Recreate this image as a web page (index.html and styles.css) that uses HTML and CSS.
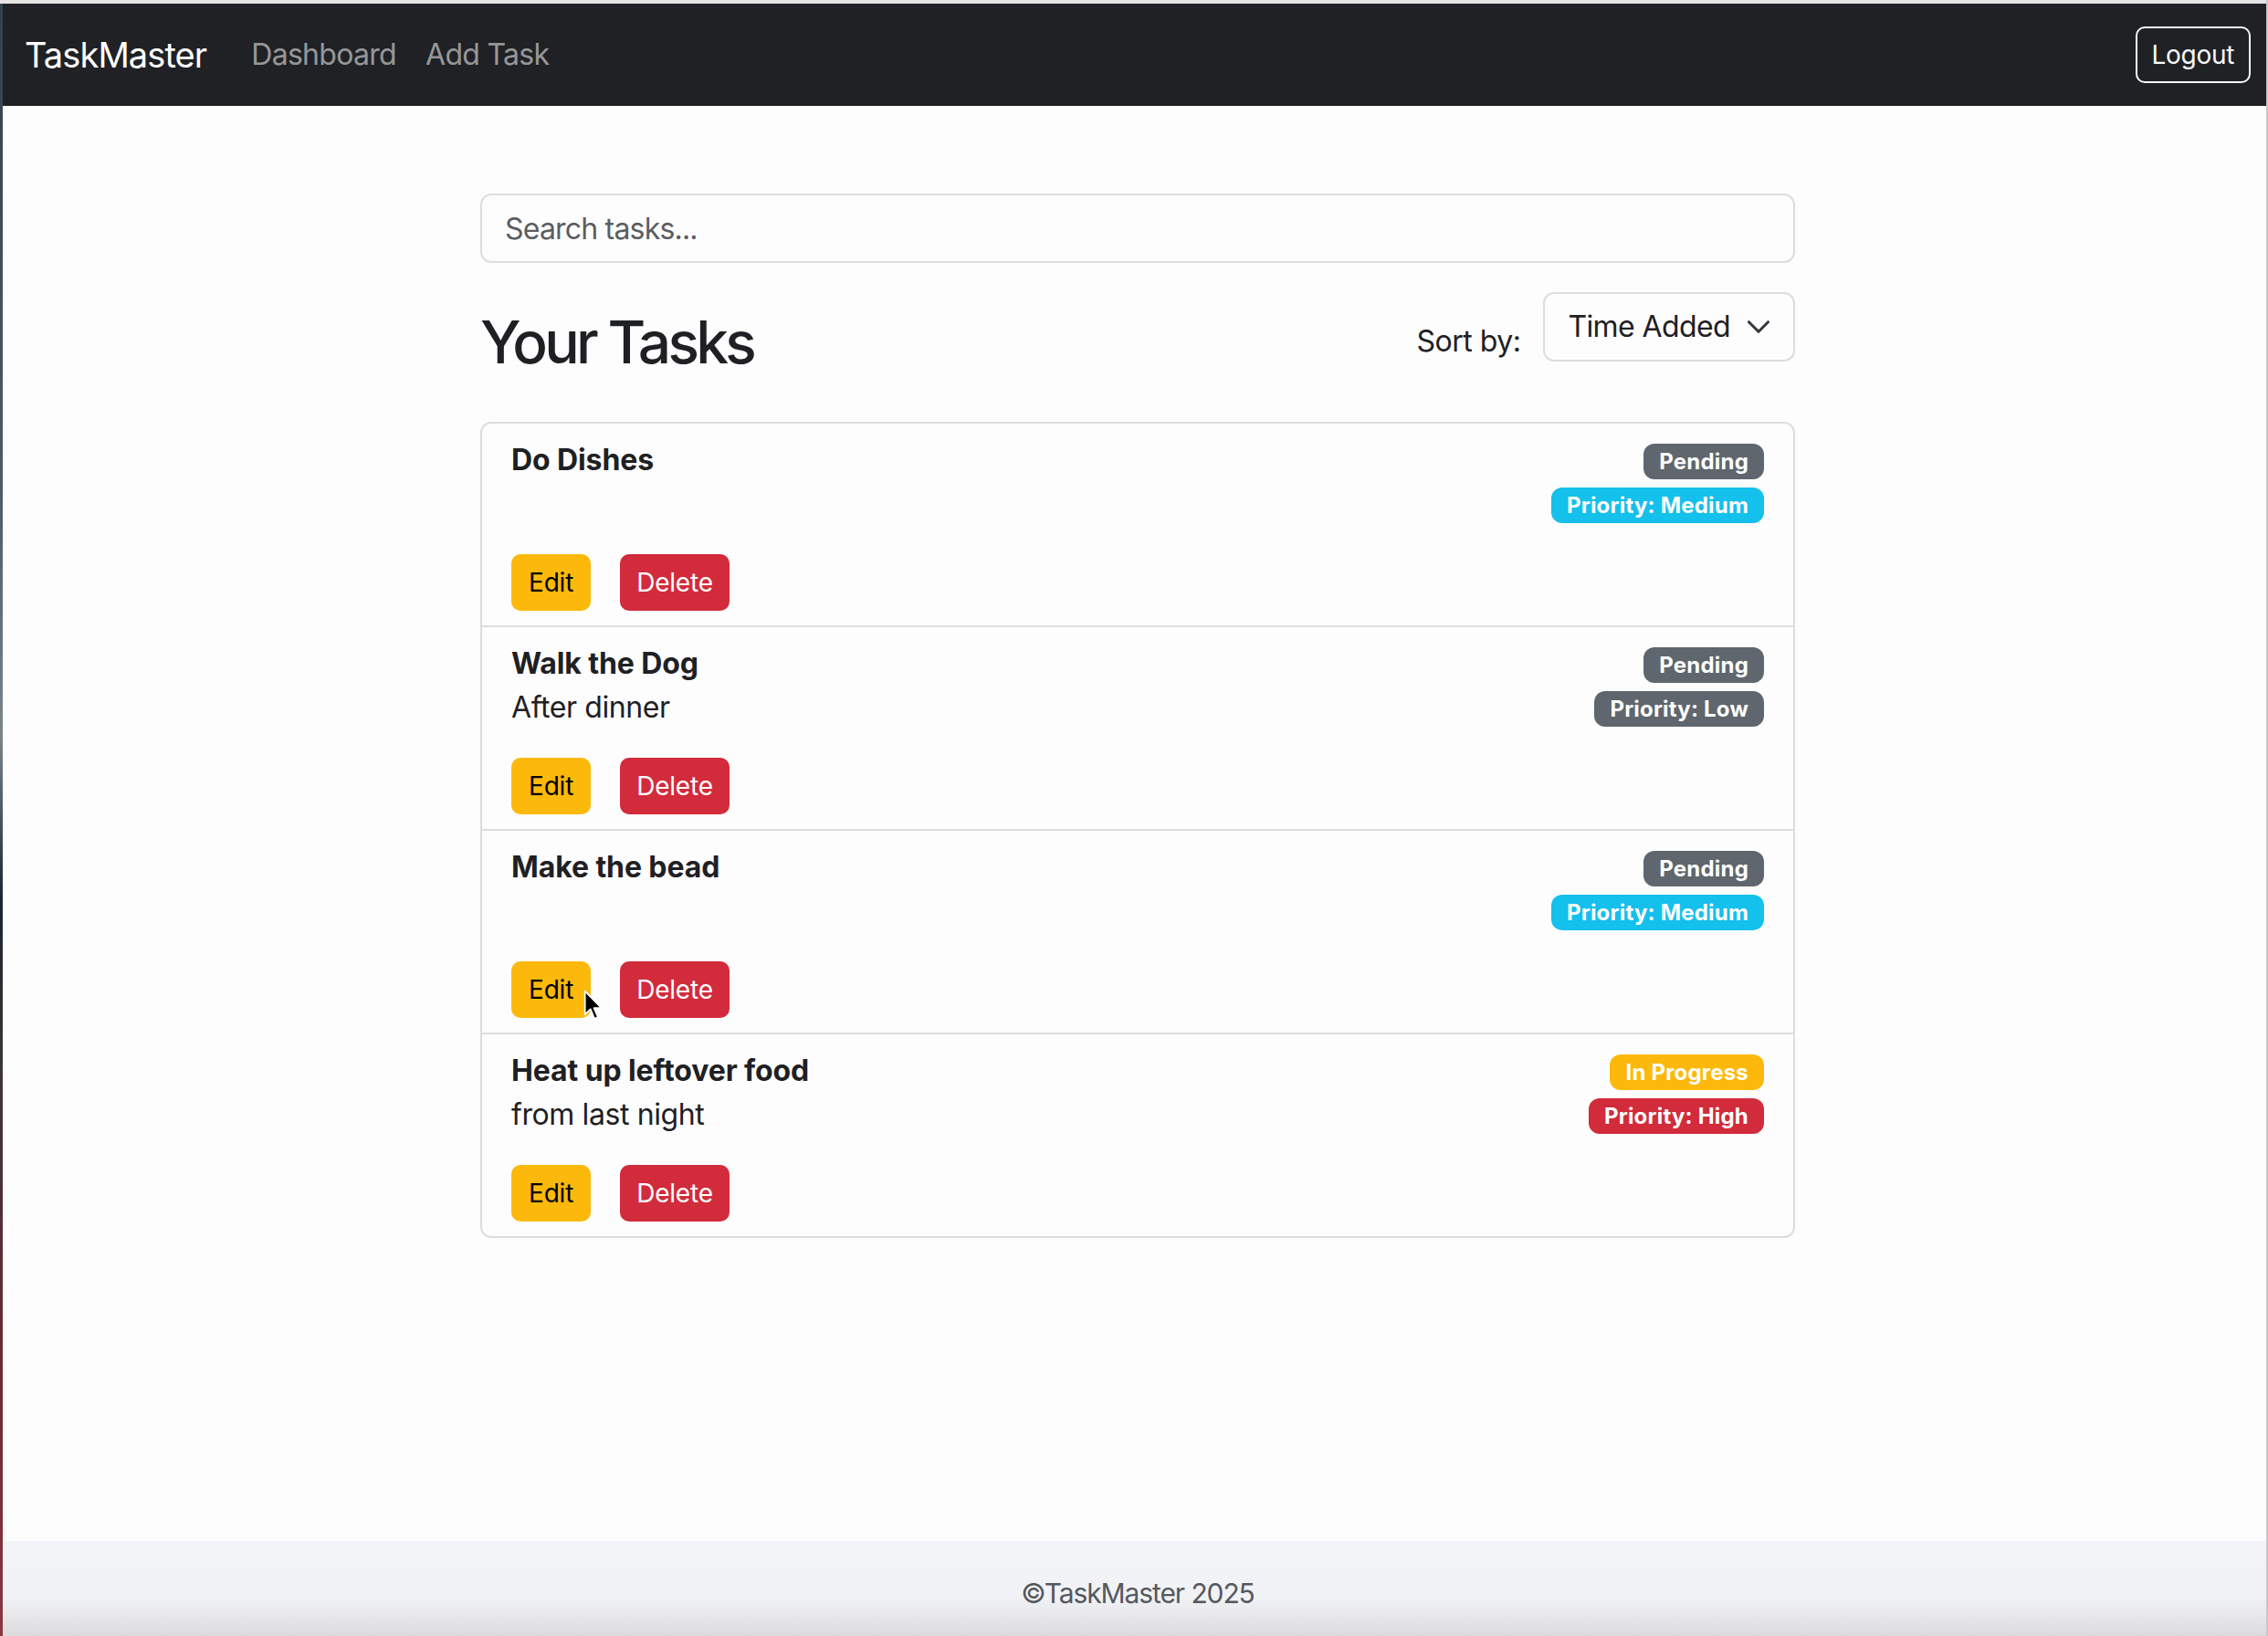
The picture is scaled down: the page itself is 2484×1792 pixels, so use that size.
FILE: index.html
```html
<!DOCTYPE html>
<html lang="en">
<head>
<meta charset="utf-8">
<title>TaskMaster</title>
<link rel="stylesheet" href="styles.css">
</head>
<body>
<div class="window">
  <nav class="navbar">
    <div class="nav-left">
      <a class="brand" href="#">TaskMaster</a>
      <a class="nav-link" href="#">Dashboard</a>
      <a class="nav-link" href="#">Add Task</a>
    </div>
    <button class="btn-logout">Logout</button>
  </nav>

  <main class="main">
    <div class="container">
      <input class="search" type="text" placeholder="Search tasks...">

      <div class="header-row">
        <h2 class="page-title">Your Tasks</h2>
        <div class="sort">
          <label class="sort-label">Sort by:</label>
          <div class="select">
            <span>Time Added</span>
            <svg class="chevron" viewBox="0 0 16 16" width="28" height="28"><path d="m2 5 6 6 6-6" fill="none" stroke="#343a40" stroke-width="1.8" stroke-linecap="round" stroke-linejoin="round"/></svg>
          </div>
        </div>
      </div>

      <ul class="task-list">
        <li class="task">
          <div class="task-top">
            <div class="task-info">
              <div class="task-title">Do Dishes</div>
              <div class="task-desc"></div>
            </div>
            <div class="badges">
              <span class="badge badge-secondary">Pending</span>
              <span class="badge badge-info">Priority: Medium</span>
            </div>
          </div>
          <div class="actions">
            <button class="btn btn-warning">Edit</button>
            <button class="btn btn-danger">Delete</button>
          </div>
        </li>
        <li class="task">
          <div class="task-top">
            <div class="task-info">
              <div class="task-title">Walk the Dog</div>
              <div class="task-desc">After dinner</div>
            </div>
            <div class="badges">
              <span class="badge badge-secondary">Pending</span>
              <span class="badge badge-secondary">Priority: Low</span>
            </div>
          </div>
          <div class="actions">
            <button class="btn btn-warning">Edit</button>
            <button class="btn btn-danger">Delete</button>
          </div>
        </li>
        <li class="task">
          <div class="task-top">
            <div class="task-info">
              <div class="task-title">Make the bead</div>
              <div class="task-desc"></div>
            </div>
            <div class="badges">
              <span class="badge badge-secondary">Pending</span>
              <span class="badge badge-info">Priority: Medium</span>
            </div>
          </div>
          <div class="actions">
            <button class="btn btn-warning has-cursor">Edit
              <svg class="cursor" viewBox="0 0 20 32" width="22" height="35"><path d="M1.5 1.5 L1.5 25 L7 19.5 L11 29 L14.5 27.5 L10.5 18.5 L18 18.5 Z" fill="#000" stroke="#fff" stroke-width="1.6" stroke-linejoin="round"/></svg>
            </button>
            <button class="btn btn-danger">Delete</button>
          </div>
        </li>
        <li class="task">
          <div class="task-top">
            <div class="task-info">
              <div class="task-title">Heat up leftover food</div>
              <div class="task-desc">from last night</div>
            </div>
            <div class="badges">
              <span class="badge badge-warning">In Progress</span>
              <span class="badge badge-danger">Priority: High</span>
            </div>
          </div>
          <div class="actions">
            <button class="btn btn-warning">Edit</button>
            <button class="btn btn-danger">Delete</button>
          </div>
        </li>
      </ul>
    </div>
  </main>

  <footer class="footer">©TaskMaster 2025</footer>
</div>
</body>
</html>
```
FILE: styles.css
```css
html, body {
  margin: 0;
  padding: 0;
  height: 100%;
  overflow: hidden;
}

body {
  font-family: Inter, "Noto Sans", "Liberation Sans", sans-serif;
  color: #1f2023;
  background:
    linear-gradient(to bottom, #e4e4e4 0, #e4e4e4 4px, transparent 4px),
    linear-gradient(to bottom, #33414d 0%, #4f5a63 30%, #7d858b 45%, #1b252d 55%, #3a3438 65%, #6e2a34 85%, #8a3842 100%);
}

body::after {
  content: "";
  position: fixed;
  top: 0;
  right: 0;
  width: 2px;
  height: 100%;
  background: #c8c8ca;
}

.window {
  margin-top: 4px;
  margin-left: 3px;
  width: 2486px;
  height: 1796px;
  display: flex;
  flex-direction: column;
  background: #fdfdfe;
}

/* Navbar */
.navbar {
  flex: 0 0 112px;
  height: 112px;
  box-sizing: border-box;
  background: #1f2125;
  display: flex;
  align-items: center;
  justify-content: space-between;
  padding: 0 24px;
}

.nav-left {
  display: flex;
  align-items: center;
}

.brand {
  font-size: 38px;
  line-height: 1.5;
  color: #ffffff;
  text-decoration: none;
  margin-right: 33px;
  letter-spacing: -0.9px;
}

.nav-link {
  font-size: 32px;
  line-height: 1.5;
  color: rgba(255, 255, 255, 0.55);
  text-decoration: none;
  padding: 0 16px;
  letter-spacing: -0.7px;
}

.btn-logout {
  font-family: inherit;
  font-size: 28px;
  line-height: 42px;
  color: #f8f9fa;
  background: transparent;
  border: 2px solid #f8f9fa;
  border-radius: 10px;
  padding: 8px 16px;
  letter-spacing: -0.3px;
}

/* Main */
.main {
  flex: 1 1 auto;
}

.container {
  width: 1440px;
  margin: 0 auto;
}

.search {
  display: block;
  box-sizing: border-box;
  width: 100%;
  margin-top: 96px;
  margin-bottom: 32px;
  height: 76px;
  padding: 12px 25px;
  font-family: inherit;
  font-size: 32px;
  line-height: 48px;
  color: #1f2023;
  background: #fdfdfe;
  border: 2px solid #dcdde1;
  border-radius: 12px;
  outline: none;
  letter-spacing: -0.8px;
}

.search::placeholder {
  color: #5a5d61;
}

.header-row {
  display: flex;
  justify-content: space-between;
  align-items: flex-start;
  margin-bottom: 48px;
}

.page-title {
  margin: 17px 0 0;
  font-size: 64px;
  line-height: 1.2;
  font-weight: 500;
  letter-spacing: -3.7px;
}

.sort {
  display: flex;
  align-items: flex-start;
}

.sort-label {
  font-size: 32px;
  line-height: 48px;
  margin-top: 30px;
  margin-right: 25px;
  letter-spacing: -0.5px;
}

.select {
  display: flex;
  align-items: center;
  box-sizing: border-box;
  height: 76px;
  padding: 12px 24px 12px 25px;
  font-size: 32px;
  line-height: 48px;
  border: 2px solid #dcdde1;
  border-radius: 12px;
  background: #fdfdfe;
  letter-spacing: -0.6px;
}

.chevron {
  margin-left: 17px;
}

/* Task list */
.task-list {
  list-style: none;
  margin: 0;
  padding: 0;
  border: 2px solid #dcdde1;
  border-radius: 12px;
}

.task {
  padding: 16px 32px;
  border-top: 2px solid #dcdde1;
}

.task:first-child {
  border-top: none;
}

.task-top {
  display: flex;
  justify-content: space-between;
  align-items: flex-start;
}

.task-info {
  min-height: 96px;
}

.task-title {
  font-size: 32px;
  line-height: 48px;
  font-weight: 700;
  letter-spacing: -0.1px;
}

.task-desc {
  font-size: 32px;
  line-height: 48px;
  min-height: 48px;
  letter-spacing: -0.4px;
}

.badges {
  display: flex;
  flex-direction: column;
  align-items: flex-end;
  gap: 9px;
  padding-top: 6px;
}

.badge {
  display: inline-block;
  height: 39px;
  line-height: 39px;
  padding: 0 17px;
  font-size: 24px;
  font-weight: 700;
  color: #ffffff;
  border-radius: 12px;
  white-space: nowrap;
  letter-spacing: 0.2px;
}

.badge-secondary { background: #5f666d; }
.badge-info { background: #14c0ec; }
.badge-warning { background: #fdb90b; }
.badge-danger { background: #d22b3c; }

.actions {
  display: flex;
  gap: 32px;
  margin-top: 31px;
}

.btn {
  font-family: inherit;
  font-size: 28px;
  line-height: 42px;
  padding: 8px 17px;
  border: 2px solid transparent;
  border-radius: 10px;
  letter-spacing: -0.2px;
}

.btn-danger {
  padding: 8px 16px;
}

.btn-warning {
  background: #fdb90b;
  border-color: #fdb90b;
  color: #000000;
}

.btn-danger {
  background: #d22b3c;
  border-color: #d22b3c;
  color: #ffffff;
}

.has-cursor {
  position: relative;
}

.cursor {
  position: absolute;
  left: 77px;
  top: 29px;
  pointer-events: none;
}

/* Footer */
.footer {
  flex: 0 0 112px;
  height: 112px;
  box-sizing: border-box;
  padding-top: 33px;
  text-align: center;
  font-size: 30px;
  line-height: 48px;
  color: #55595e;
  letter-spacing: -1.1px;
  background: linear-gradient(to bottom, #f3f4f8 0%, #f1f2f5 55%, #e8e8eb 72%, #dcdcde 92%, #c8c8c8 96%);
}
```
